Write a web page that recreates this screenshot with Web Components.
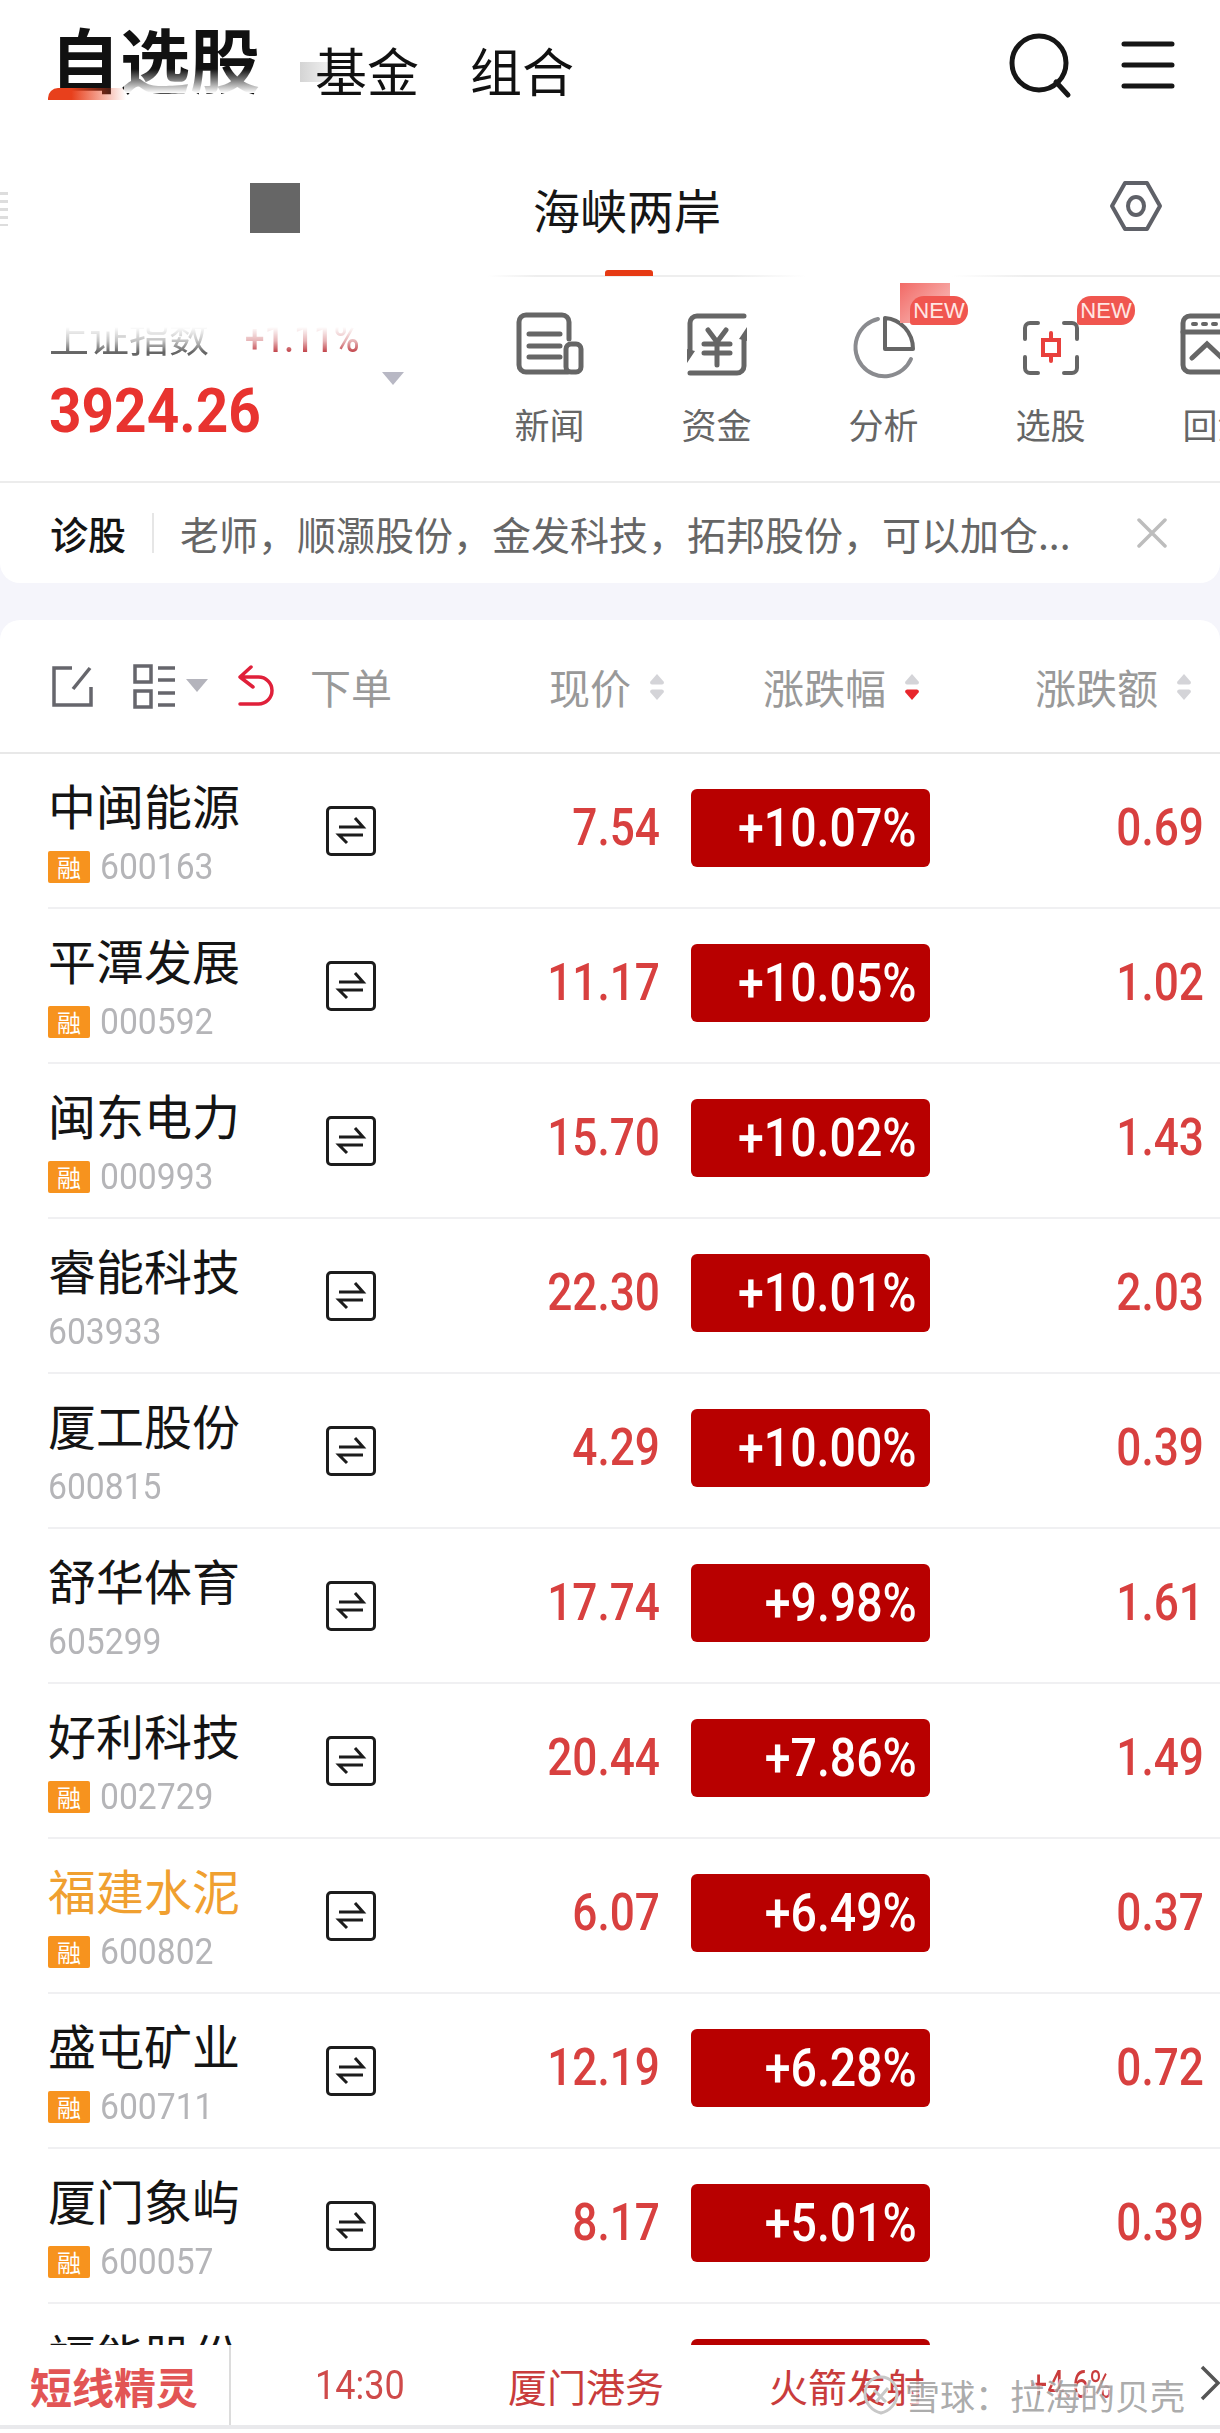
<!DOCTYPE html>
<html lang="zh">
<head>
<meta charset="utf-8">
<title>自选股</title>
<style>
  html, body { margin: 0; padding: 0; background: #f5f5fb; }
  body { font-family: "Noto Sans CJK SC", "Noto Sans", sans-serif; width: 1220px; height: 2433px; overflow: hidden; }
  .stage { display: flex; flex-direction: column; height: 2433px; overflow: hidden; }
</style>
</head>
<body>
<div class="stage">
  <top-bar></top-bar>
  <sub-tabs></sub-tabs>
  <index-strip></index-strip>
  <notice-bar>老师，顺灏股份，金发科技，拓邦股份，可以加仓...</notice-bar>
  <quote-table>
    <quote-row code="600163" margin price="7.54" pct="+10.07%" chg="0.69">中闽能源</quote-row>
    <quote-row code="000592" margin price="11.17" pct="+10.05%" chg="1.02">平潭发展</quote-row>
    <quote-row code="000993" margin price="15.70" pct="+10.02%" chg="1.43">闽东电力</quote-row>
    <quote-row code="603933" price="22.30" pct="+10.01%" chg="2.03">睿能科技</quote-row>
    <quote-row code="600815" price="4.29" pct="+10.00%" chg="0.39">厦工股份</quote-row>
    <quote-row code="605299" price="17.74" pct="+9.98%" chg="1.61">舒华体育</quote-row>
    <quote-row code="002729" margin price="20.44" pct="+7.86%" chg="1.49">好利科技</quote-row>
    <quote-row code="600802" margin hot price="6.07" pct="+6.49%" chg="0.37">福建水泥</quote-row>
    <quote-row code="600711" margin price="12.19" pct="+6.28%" chg="0.72">盛屯矿业</quote-row>
    <quote-row code="600057" margin price="8.17" pct="+5.01%" chg="0.39">厦门象屿</quote-row>
    <quote-row code="600483" price="9.12" pct="+4.83%" chg="0.42">福能股份</quote-row>
  </quote-table>
  <ticker-bar></ticker-bar>
</div>

<script>
(function () {
  const CJK = '"Noto Sans CJK SC", "Noto Sans", sans-serif';
  const NUM = 'Roboto, "Liberation Sans", sans-serif';

  const define = (name, css, html, setup) => {
    customElements.define(name, class extends HTMLElement {
      constructor() {
        super();
        this.attachShadow({ mode: "open" }).innerHTML = `<style>${css}</style>${html}`;
      }
      connectedCallback() {
        if (setup) setup(this);
      }
    });
  };

  define("top-bar", `
    :host { display: flex; align-items: flex-start; height: 120px; background: #fff; padding-left: 50px; font-family: ${CJK}; color: #111; position: relative; flex: none; }
    .main { font-size: 70px; font-weight: 700; line-height: 70px; margin-top: 23px; position: relative; width: 265px; }
    .main::before { content: ""; position: absolute; left: -2px; top: 65px; width: 78px; height: 12px; border-radius: 10px 0 0 0; background: linear-gradient(90deg, #e8401c 30%, rgba(232,64,28,0)); }
    .main::after { content: ""; position: absolute; left: 74px; top: 46px; width: 140px; height: 24px; background: linear-gradient(rgba(255,255,255,0), #fff); }
    .tab { font-size: 52px; line-height: 52px; margin-top: 44px; width: 155px; position: relative; }
    .fade::before { content: ""; position: absolute; left: -15px; top: 18px; width: 56px; height: 20px; background: linear-gradient(90deg, #d4d4d4, rgba(255,255,255,0) 80%); }
    .fade span { position: relative; }
    svg { position: absolute; top: 30px; }
  `, `
    <div class="main">自选股</div>
    <div class="tab fade"><span>基金</span></div>
    <div class="tab">组合</div>
    <svg style="left:1006px" width="68" height="72" viewBox="0 0 68 72" fill="none" stroke="#161616" stroke-width="5" stroke-linecap="round">
      <ellipse cx="33" cy="33" rx="27" ry="27"/><path d="M50 52 L62 65"/>
    </svg>
    <svg style="left:1120px" width="56" height="68" viewBox="0 0 56 68" fill="none" stroke="#161616" stroke-width="5" stroke-linecap="round">
      <path d="M4 14H52M4 35H52M4 56H52"/>
    </svg>
  `);

  define("sub-tabs", `
    :host { display: flex; align-items: flex-start; height: 157px; background: #fff; padding-left: 250px; font-family: ${CJK}; position: relative; flex: none; }
    :host::after { content: ""; position: absolute; left: 0; right: 0; bottom: 0; height: 2px; background: linear-gradient(90deg, transparent 40%, #eee 44%, #eee 60%, transparent 66%, transparent 78%, #eee 84%); }
    .block { width: 50px; height: 50px; background: #666; margin-top: 63px; }
    .tab { display: flex; flex-direction: column; align-items: center; margin-left: 233px; width: 188px; }
    .tab span { font-size: 47px; line-height: 48px; color: #161616; margin-top: 65px; white-space: nowrap; }
    .tab i { display: block; width: 48px; height: 6px; background: #e63a14; margin-top: 37px; border-radius: 3px 3px 0 0; z-index: 1; margin-left: 3px; }
    svg { margin: 60px 0 0 388px; flex: none; }
    .edge { position: absolute; left: 0; top: 72px; width: 8px; height: 34px; background: repeating-linear-gradient(#ddd 0 3px, #fff 3px 8px); }
  `, `
    <div class="edge"></div>
    <div class="block"></div>
    <div class="tab"><span>海峡两岸</span><i></i></div>
    <svg width="54" height="52" viewBox="0 0 54 52" fill="none" stroke="#5f6168" stroke-width="4">
      <path d="M16 3H38L51 26L38 49H16L3 26Z" stroke-linejoin="round"/><ellipse cx="27" cy="26" rx="8" ry="9"/>
    </svg>
  `);

  const ENTRY_ICONS = {
    news: `<path d="M52 59H10a7 7 0 0 1-7-7V9a7 7 0 0 1 7-7H46a7 7 0 0 1 7 7V26"/><path d="M13 21H44M13 33H44M13 44H44"/><rect x="50" y="31" width="15" height="28" rx="5"/>`,
    fund: `<path d="M60 3H13a7 7 0 0 0-7 7V38"/><path d="M6 60H53a7 7 0 0 0 7-7V25"/><path d="M3 36L3 50L11 38Z M63 28L63 14L55 26Z" fill="#666" stroke="none"/><path d="M24 17L33 29L42 17M20 31H46M20 40H46M33 29V52"/>`,
    pie: `<path d="M27 6A29 29 0 1 0 60 46" stroke="#8a8b8f" stroke-width="4"/><path d="M34 5V36H62A30 31 0 0 0 34 5Z" stroke-linejoin="round" stroke-width="4"/>`,
    pick: `<path d="M16 10H8a5 5 0 0 0-5 5V26M42 10H50a5 5 0 0 1 5 5V26M16 60H8a5 5 0 0 1-5-5V44M42 60H50a5 5 0 0 0 5-5V44" stroke-width="4"/><path d="M29 20V48" stroke="#e8403c" stroke-width="4"/><rect x="21" y="27" width="16" height="15" fill="#fff" stroke="#e8403c" stroke-width="4"/>`,
    back: `<rect x="3" y="3" width="70" height="56" rx="7"/><path d="M3 19H73"/><path d="M13 11h3M23 11h3M33 11h3" stroke-width="4"/><path d="M12 45L27 31L42 45"/>`,
  };

  define("index-strip", `
    :host { display: flex; height: 204px; background: #fff; border-bottom: 2px solid #ececec; font-family: ${CJK}; flex: none; box-sizing: content-box; }
    .idx { padding-left: 49px; width: 417px; position: relative; flex: none; }
    .top { display: flex; align-items: baseline; margin-top: 34px; height: 48px; -webkit-mask-image: linear-gradient(transparent 16px, rgba(0,0,0,.4) 30px, #000 41px); mask-image: linear-gradient(transparent 16px, rgba(0,0,0,.4) 30px, #000 41px); }
    .name { font-size: 40px; line-height: 48px; color: #666; white-space: nowrap; }
    .rate { font-family: ${NUM}; font-size: 38px; font-weight: 500; color: #c2444a; margin-left: 36px; transform: scaleX(.92); transform-origin: left; }
    .price { font-family: ${NUM}; font-weight: 700; font-size: 62px; line-height: 70px; color: #e8332f; margin-top: 17px; transform: scaleX(.915); transform-origin: left; }
    .tri { position: absolute; left: 382px; top: 95px; width: 0; height: 0; border: 11px solid transparent; border-top: 13px solid #b8b8c4; border-bottom: 0; }
    .entries { display: flex; flex: none; }
    .entry { width: 167px; flex: none; position: relative; display: flex; flex-direction: column; align-items: center; }
    .entry span { font-size: 35px; line-height: 40px; color: #666; margin-top: 21px; white-space: nowrap; }
    svg { margin-top: 36px; height: 70px; display: block; overflow: visible; }
    .new { position: absolute; top: 19px; left: 110px; width: 58px; height: 29px; border-radius: 14px 14px 14px 3px; background: #f0564f; color: #ffe6e3; font: 22px/29px "Liberation Sans", sans-serif; text-align: center; }
    .sq { position: absolute; top: 6px; left: 100px; width: 50px; height: 40px; background: linear-gradient(135deg, #f26a66, #f9c7c4); }
  `, `
    <div class="idx">
      <div class="top"><span class="name">上证指数</span><span class="rate">+1.11%</span></div>
      <div class="price">3924.26</div>
      <div class="tri"></div>
    </div>
    <div class="entries"></div>
  `, (el) => {
    const box = el.shadowRoot.querySelector(".entries");
    if (box.children.length) return;
    const list = [
      ["新闻", "news", 70, 68, ""],
      ["资金", "fund", 70, 66, ""],
      ["分析", "pie", 70, 66, "sq"],
      ["选股", "pick", 70, 58, "plain"],
      ["回测", "back", 70, 76, ""],
    ];
    box.innerHTML = list.map(([label, key, h, w, mark]) => `
      <div class="entry">
        ${mark === "sq" ? '<div class="sq"></div>' : ""}
        <svg width="${w}" height="${h}" viewBox="0 0 ${w} ${h}" fill="none" stroke="#666" stroke-width="5" stroke-linecap="round">${ENTRY_ICONS[key]}</svg>
        ${mark ? '<div class="new">NEW</div>' : ""}
        <span>${label}</span>
      </div>`).join("");
  });

  define("notice-bar", `
    :host { display: flex; align-items: center; height: 100px; background: #fff; border-radius: 0 0 20px 20px; padding-left: 50px; font-family: ${CJK}; flex: none; }
    b { font-size: 38px; font-weight: 500; color: #141414; width: 102px; flex: none; line-height: 40px; }
    .line { width: 2px; height: 40px; background: #e6e6e6; flex: none; margin-right: 26px; }
    .text { font-size: 39px; color: #666; white-space: nowrap; width: 957px; flex: none; line-height: 50px; }
    svg { flex: none; }
  `, `
    <b>诊股</b><div class="line"></div>
    <div class="text"><slot></slot></div>
    <svg width="30" height="30" viewBox="0 0 30 30" stroke="#bdbdbd" stroke-width="3.5" stroke-linecap="round"><path d="M2 2L28 28M28 2L2 28"/></svg>
  `);

  const sortIcon = (down) => `
    <svg class="sort" width="16" height="30" viewBox="0 0 16 30" stroke-linejoin="round">
      <path d="M8 2L15 10Q15 12.500 13 12.500H3Q1 12.500 1 10Z" fill="#d4d4d8"/>
      <path d="M3 17.500H13Q15 17.500 15 20L8 28L1 20Q1 17.500 3 17.500Z" fill="${down ? "#e8262c" : "#d4d4d8"}"/>
    </svg>`;

  define("quote-table", `
    :host { display: flex; flex-direction: column; flex: 1 1 0; min-height: 0; overflow: hidden; background: #fff; border-radius: 20px 20px 0 0; margin-top: 37px; font-family: ${CJK}; }
    .head { display: flex; align-items: center; height: 132px; border-bottom: 2px solid #e8e8e8; flex: none; position: relative; }
    svg.tools { margin-left: 50px; flex: none; }
    .col { font-size: 41px; color: #999; line-height: 48px; flex: none; white-space: nowrap; }
    .col.first { margin-left: 28px; width: 239px; }
    .group { display: flex; align-items: center; gap: 18px; flex: none; }
    .sort { flex: none; margin-top: 2px; }
    .rows { display: flex; flex-direction: column; }
  `, `
    <div class="head">
      <svg class="tools" width="232" height="48" viewBox="0 0 232 48" fill="none" stroke-width="3.5">
        <path d="M22 6H4V43H41V25" stroke="#66666c"/><path d="M23 27L40 6" stroke="#66666c"/>
        <g stroke="#66666c"><rect x="85" y="4" width="16" height="16"/><rect x="85" y="29" width="16" height="16"/><path d="M108 6H125M108 18H125M108 31H125M108 43H125"/></g>
        <path d="M136 17H158L147 30Z" fill="#b4b4bc"/>
        <path d="M201 5L190 15L203 25M190 15H208.500A13.500 13.500 0 0 1 208.500 42H190" stroke="#e0203a" stroke-linecap="round" stroke-linejoin="round"/>
      </svg>
      <div class="col first">下单</div>
      <div class="group" style="width:214px"><span class="col">现价</span>${sortIcon(false)}</div>
      <div class="group" style="width:272px"><span class="col">涨跌幅</span>${sortIcon(true)}</div>
      <div class="group"><span class="col">涨跌额</span>${sortIcon(false)}</div>
    </div>
    <div class="rows"><slot></slot></div>
  `);

  define("quote-row", `
    :host { display: block; flex: none; padding-left: 48px; font-family: ${CJK}; }
    .row { display: grid; grid-template-columns: 278px 50px 284px 270px 274px; height: 153px; border-bottom: 2px solid #f0f0f2; align-items: center; }
    .id { display: flex; flex-direction: column; }
    .name { font-size: 48px; line-height: 58px; color: #141414; margin-top: -2px; white-space: nowrap; }
    :host([hot]) .name { color: #f0a030; }
    .sub { display: flex; align-items: center; height: 36px; margin-top: 16px; }
    .tag { display: none; width: 42px; height: 32px; background: #f7931e; color: #fff; font-size: 24px; line-height: 32px; text-align: center; border-radius: 2px; margin-right: 10px; flex: none; }
    :host([margin]) .tag { display: block; }
    .code { font-family: ${NUM}; font-size: 37px; color: #b5b5b8; transform: scaleX(.91); transform-origin: left; }
    .swap { display: block; margin-top: 1px; }
    .num { font-family: ${NUM}; font-weight: 500; font-size: 52px; color: #d8403f; text-align: right; transform: scaleX(.85); transform-origin: right; margin-top: -6px; }
    .pill { margin-left: 31px; width: 239px; height: 78px; background: #b80000; border-radius: 6px; color: #fff; font-family: ${NUM}; font-weight: 500; font-size: 54px; line-height: 78px; text-align: right; padding-right: 13px; box-sizing: border-box; margin-top: -6px; }
    .pill span { display: inline-block; transform: scaleX(.86); transform-origin: right; }
  `, `
    <div class="row">
      <div class="id">
        <div class="name"><slot></slot></div>
        <div class="sub"><div class="tag">融</div><div class="code"></div></div>
      </div>
      <svg class="swap" width="50" height="50" viewBox="0 0 50 50" fill="none" stroke="#1c1c1c" stroke-width="3">
        <rect x="1.500" y="1.500" width="47" height="47" rx="3.500"/>
        <path d="M13 21H37L29 12M37 29H13L21 37"/>
      </svg>
      <div class="num price"></div>
      <div class="pill"><span></span></div>
      <div class="num chg"></div>
    </div>
  `, (el) => {
    const root = el.shadowRoot;
    root.querySelector(".code").textContent = el.getAttribute("code");
    root.querySelector(".price").textContent = el.getAttribute("price");
    root.querySelector(".pill span").textContent = el.getAttribute("pct");
    root.querySelector(".chg").textContent = el.getAttribute("chg");
  });

  define("ticker-bar", `
    :host { display: flex; align-items: center; background: #fff; border-bottom: 4px solid #e9e9ec; box-sizing: border-box; height: 84px; margin-bottom: 4px; font-family: ${CJK}; color: #cf4a4a; flex: none; position: relative; box-shadow: 0 4px 0 #fff; }
    .brand { width: 229px; height: 100%; border-right: 2px solid #dcdcdc; display: flex; align-items: center; flex: none; font-size: 42px; font-weight: 700; color: #e25555; }
    .brand span { margin-left: 30px; }
    .items { display: flex; align-items: center; padding-left: 84px; font-size: 39px; white-space: nowrap; }
    .t { font-family: ${NUM}; width: 193px; display: block; transform: scaleX(.9); transform-origin: left; font-size: 40px; }
    .n { width: 261px; display: block; color: #c93c3c; }
    .p { font-family: ${NUM}; font-size: 38px; color: #c93c3c; transform: scaleX(.8); transform-origin: left; }
    .chev { position: absolute; left: 1200px; top: 20px; }
    .mark { position: absolute; left: 862px; top: 24px; display: flex; align-items: center; gap: 5px; font-size: 35px; color: rgba(150,150,150,.8); text-shadow: 2px 2px 1px rgba(255,255,255,.9), -1px -1px 0 rgba(255,255,255,.6); white-space: nowrap; }
    .mark svg { display: block; }
  `, `
    <div class="brand"><span>短线精灵</span></div>
    <div class="items">
      <span class="t">14:30</span>
      <span class="n">厦门港务</span>
      <span class="n">火箭发射</span>
      <span class="p">+4.6%</span>
    </div>
    <svg class="chev" width="20" height="36" viewBox="0 0 20 36" fill="none" stroke="#555" stroke-width="3.500"><path d="M2 2L18 18L2 34"/></svg>
    <div class="mark">
      <svg width="38" height="42" viewBox="0 0 38 42" fill="none" stroke="#c8c8c8" stroke-width="3"><path d="M19 3C29 3 35 11 35 20C35 29 28 37 19 39C10 37 3 29 3 20C3 11 9 3 19 3Z"/><path d="M12 16L24 28M26 14L14 28"/></svg>
      <span>雪球：拉海的贝壳</span>
    </div>
  `);
})();
</script>
</body>
</html>
